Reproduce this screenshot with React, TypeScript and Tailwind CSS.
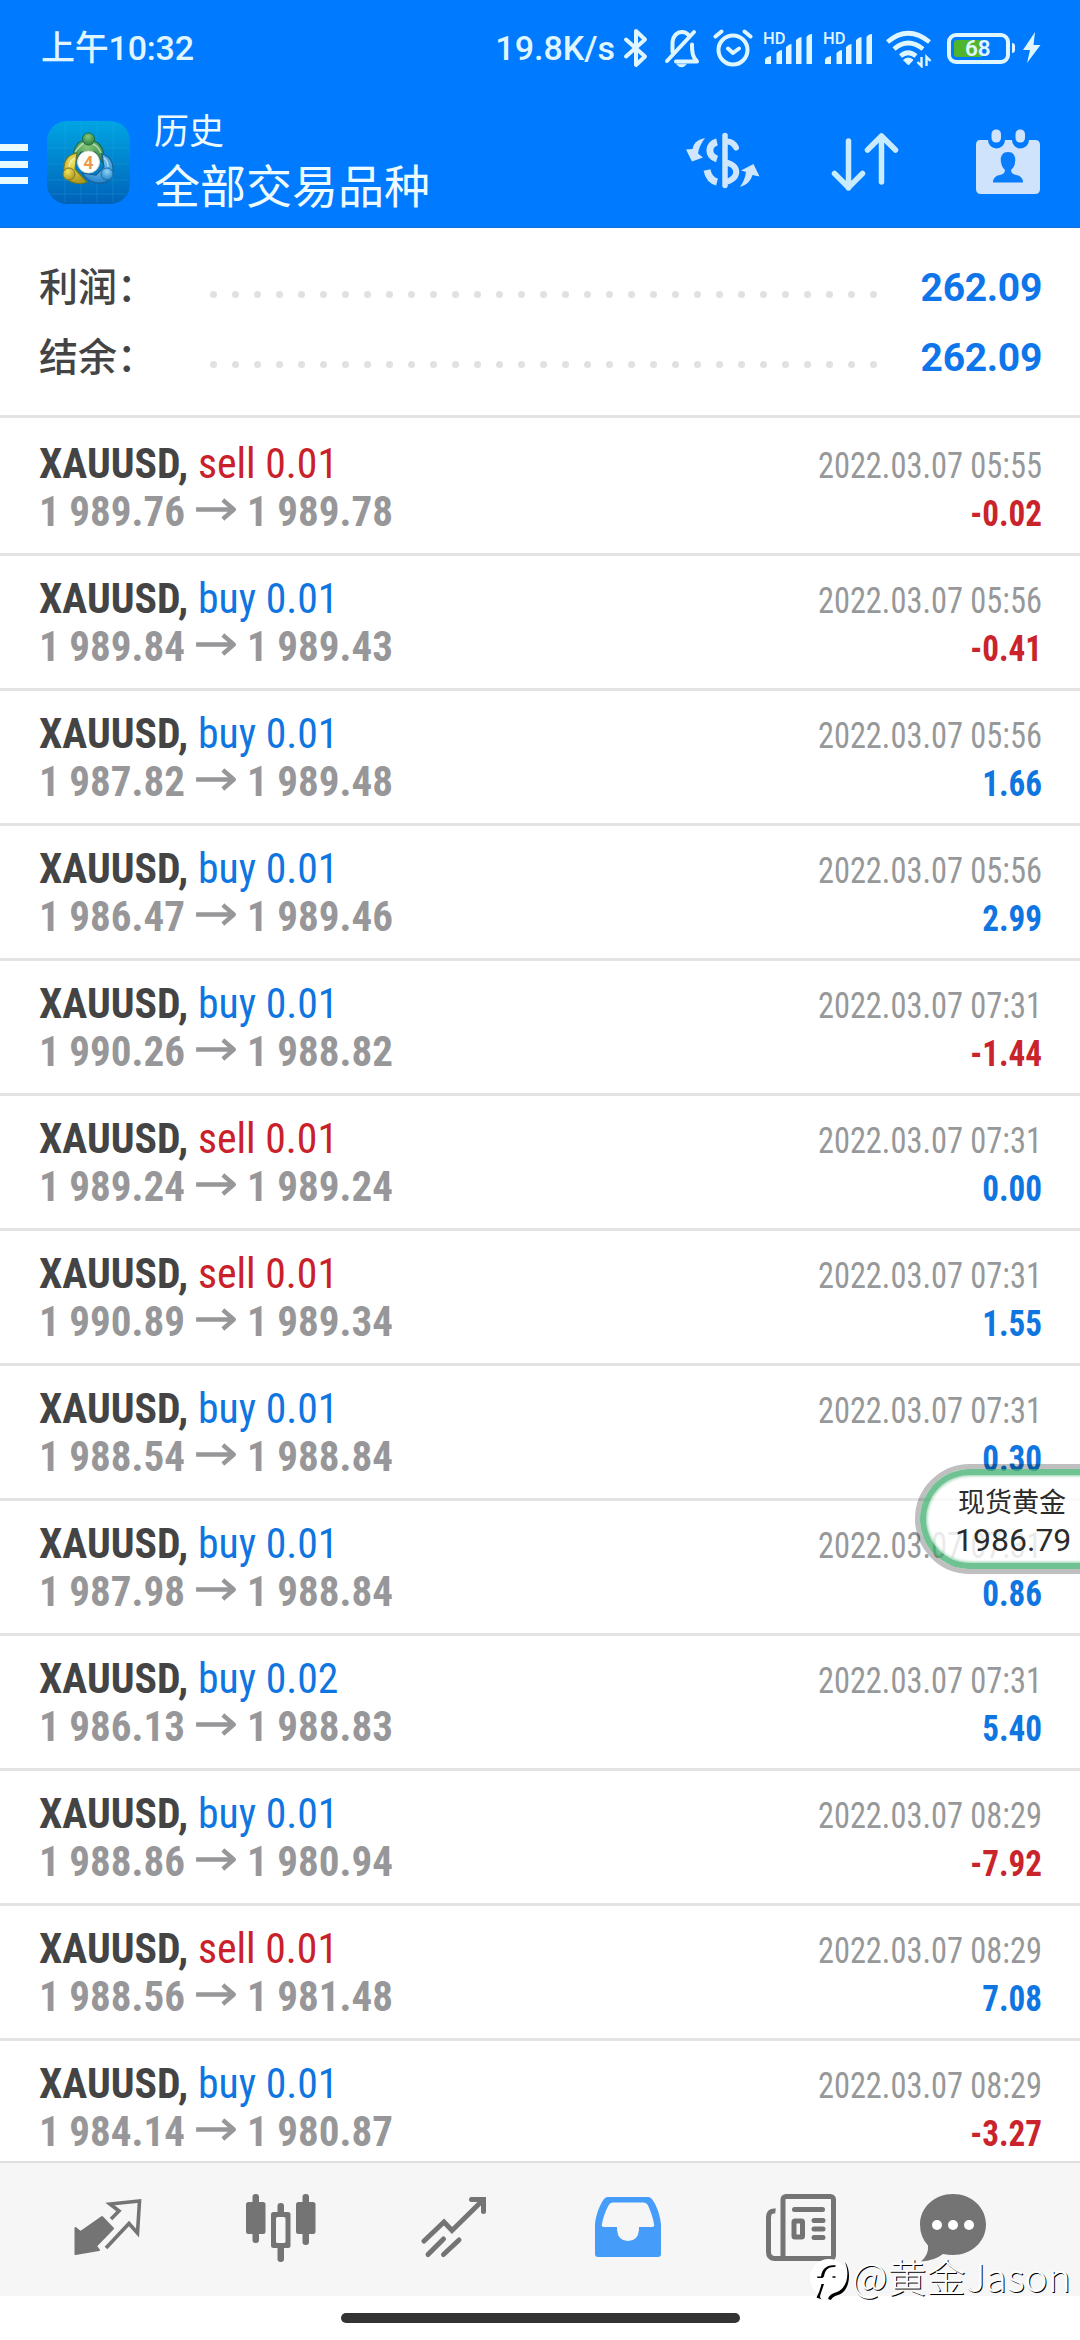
type Deal = {
  side: "buy" | "sell";
  volume: string;
  open: string;
  close: string;
  time: string;
  profit: string;
};

const DEALS: Deal[] = [
  { side: "sell", volume: "0.01", open: "1 989.76", close: "1 989.78", time: "2022.03.07 05:55", profit: "-0.02" },
  { side: "buy", volume: "0.01", open: "1 989.84", close: "1 989.43", time: "2022.03.07 05:56", profit: "-0.41" },
  { side: "buy", volume: "0.01", open: "1 987.82", close: "1 989.48", time: "2022.03.07 05:56", profit: "1.66" },
  { side: "buy", volume: "0.01", open: "1 986.47", close: "1 989.46", time: "2022.03.07 05:56", profit: "2.99" },
  { side: "buy", volume: "0.01", open: "1 990.26", close: "1 988.82", time: "2022.03.07 07:31", profit: "-1.44" },
  { side: "sell", volume: "0.01", open: "1 989.24", close: "1 989.24", time: "2022.03.07 07:31", profit: "0.00" },
  { side: "sell", volume: "0.01", open: "1 990.89", close: "1 989.34", time: "2022.03.07 07:31", profit: "1.55" },
  { side: "buy", volume: "0.01", open: "1 988.54", close: "1 988.84", time: "2022.03.07 07:31", profit: "0.30" },
  { side: "buy", volume: "0.01", open: "1 987.98", close: "1 988.84", time: "2022.03.07 07:31", profit: "0.86" },
  { side: "buy", volume: "0.02", open: "1 986.13", close: "1 988.83", time: "2022.03.07 07:31", profit: "5.40" },
  { side: "buy", volume: "0.01", open: "1 988.86", close: "1 980.94", time: "2022.03.07 08:29", profit: "-7.92" },
  { side: "sell", volume: "0.01", open: "1 988.56", close: "1 981.48", time: "2022.03.07 08:29", profit: "7.08" },
  { side: "buy", volume: "0.01", open: "1 984.14", close: "1 980.87", time: "2022.03.07 08:29", profit: "-3.27" },
];

const Signal = () => (
  <svg className="overflow-visible" width="50" height="36" viewBox="0 0 50 36" fill="#dff6ff">
    <text x="0" y="14" fontSize="16.500" fontWeight="500" fontFamily="Roboto, sans-serif">
      HD
    </text>
    <path d="M2 34v-4q0-3 6-4v8zM13.500 34v-11q3-3 5.500-3v14zM23 34v-17q3-3 5.500-3v20zM33 34v-24q3-3 5.500-3v27zM43.500 34v-27q2-3 5.500-3v30z" />
  </svg>
);

const StatusBar = () => (
  <div className="flex h-[96px] items-center justify-between pl-[41px] pr-[39px] font-['Roboto','Noto_Sans_CJK_SC',sans-serif] text-[34px] font-medium leading-[48px] text-[#e0f6ff]">
    <span className="tracking-[-0.2px]">上午10:32</span>
    <div className="flex items-center">
      <span className="mr-[8px]">19.8K/s</span>
      {/* bluetooth */}
      <svg className="mr-[15px]" width="26" height="40" viewBox="0 0 26 40" fill="none" stroke="#dff6ff" strokeWidth="4" strokeLinejoin="round" strokeLinecap="round">
        <path d="M3 11.500l19 17-9 8.500v-34l9 8.500-19 17" />
      </svg>
      {/* muted bell */}
      <svg className="mr-[13px]" width="36" height="40" viewBox="0 0 36 40" fill="none" stroke="#dff6ff" strokeWidth="4" strokeLinecap="round" strokeLinejoin="round">
        <path d="M3 33L30 4" />
        <path d="M8.500 24V14C9 8 13 4 18 4c3 0 5 1 6.500 3" />
        <path d="M12 33.500h21c-4-4-5-8-5-17" />
        <path d="M13 36.500q4.500 5 9 0z" fill="#dff6ff" strokeWidth="1" />
      </svg>
      {/* alarm */}
      <svg className="mr-[10px]" width="40" height="40" viewBox="0 0 40 40" fill="none" stroke="#dff6ff" strokeWidth="4" strokeLinecap="round" strokeLinejoin="round">
        <circle cx="20" cy="22" r="14.500" />
        <path d="M2.500 8.500l6-5M37.500 8.500l-6-5M15 20.500l5 4.500 6-4.500" />
      </svg>
      <Signal />
      <div className="w-[10px]" />
      <Signal />
      {/* wifi */}
      <svg className="ml-[12px] mr-[15px]" width="47" height="40" viewBox="0 0 47 40" fill="none" stroke="#dff6ff" strokeWidth="4.600">
        <path d="M2.500 14Q23 -3.500 44.500 14M9 21Q23 9 38 21M15.500 28Q23 21.500 31 28" />
        <path d="M18.500 32q5-4 9.500 0l-4.500 5z" fill="#dff6ff" strokeWidth="1" />
        <path d="M36.500 29v9l-4-4M41.500 38v-9l4 4" strokeWidth="2.400" />
      </svg>
      {/* battery */}
      <div className="flex h-[31px] w-[63px] items-center rounded-[9px] border-[4px] border-[#dff6ff]">
        <div className="ml-[3px] flex h-[17px] w-[28px] items-center rounded-l-[3px] bg-[#4fb52c]">
          <span className="ml-[11px] text-[22.5px] font-semibold leading-[20px]">68</span>
        </div>
      </div>
      <div className="ml-[2px] h-[10px] w-[3px] rounded-r-sm bg-[#dff6ff]" />
      <svg className="ml-[8px]" width="18" height="32" viewBox="0 0 18 32" fill="#dff6ff">
        <path d="M12 0L0 18h7L4 31 17.500 13H10.500z" />
      </svg>
    </div>
  </div>
);

const AppLogo = () => (
  <svg width="83" height="83" viewBox="0 0 83 83">
    <defs>
      <linearGradient id="tile" x1="0" y1="0" x2="0" y2="1">
        <stop offset="0" stopColor="#00a5e3" />
        <stop offset="1" stopColor="#0062b8" />
      </linearGradient>
      <radialGradient id="green" cx=".45" cy=".3" r=".7">
        <stop offset="0" stopColor="#86c878" />
        <stop offset="1" stopColor="#2d8244" />
      </radialGradient>
      <radialGradient id="yellow" cx=".4" cy=".3" r=".7">
        <stop offset="0" stopColor="#f2e45c" />
        <stop offset="1" stopColor="#ae9a20" />
      </radialGradient>
      <radialGradient id="blue" cx=".5" cy=".3" r=".7">
        <stop offset="0" stopColor="#8fd4f6" />
        <stop offset="1" stopColor="#2383c9" />
      </radialGradient>
    </defs>
    <rect width="83" height="83" rx="20" fill="url(#tile)" />
    <path d="M18 2v79M34 1v81M50 1v81M66 2v79M1 27h81M1 43h81M1 59h81M4 73h75" stroke="#36b4e6" strokeOpacity=".22" />
    <path d="M27 42C24 23 34 19 41 19S60 24 56 42L48 31H34z" fill="url(#green)" stroke="#1c6a4f" strokeWidth="1.200" />
    <path d="M30 32C18 34 15 44 18 54c3 9 16 10 22 7L28 48z" fill="url(#yellow)" stroke="#6f7628" strokeWidth="1.200" />
    <path d="M55 33c10 3 13 12 10 22-5 10-22 10-30-3l14 2 8-8z" fill="url(#blue)" stroke="#175f98" strokeWidth="1.200" />
    <path d="M28 31q7-9 10-9M46 23q5 2 8 9M22 46q1-7 6-9M61 46q0-6-4-9" stroke="#fff" strokeOpacity=".55" strokeWidth="1.500" fill="none" />
    <circle cx="41.500" cy="18" r="6" fill="url(#green)" stroke="#236b42" />
    <circle cx="22" cy="53" r="6" fill="url(#yellow)" stroke="#83772a" />
    <circle cx="60" cy="53" r="6" fill="url(#blue)" stroke="#1e70ab" />
    <circle cx="41.500" cy="41" r="11" fill="#fff" stroke="#d5dbc9" />
    <text x="41.500" y="47.500" textAnchor="middle" fontSize="18" fontWeight="700" fill="#ee9a4b" fontFamily="Roboto, sans-serif">
      4
    </text>
  </svg>
);

const AppBar = () => (
  <div className="flex h-[132px] border-b border-[#146fd8] text-[#edfbff]">
    <div className="mr-[19px] mt-[48px] flex h-[40px] w-[28px] flex-col justify-between">
      <div className="h-[7px] bg-[#e6faff]" />
      <div className="h-[7px] bg-[#e6faff]" />
      <div className="h-[7px] bg-[#e6faff]" />
    </div>
    <div className="mt-[25px]">
      <AppLogo />
    </div>
    <div className="ml-[24px] mt-[10px] flex flex-col">
      <span className="text-[35px] leading-[46px]">历史</span>
      <span className="mt-[3px] text-[46px] leading-[56px]">全部交易品种</span>
    </div>
    <div className="ml-auto flex items-start pr-[40px] pt-[33px]">
      <svg className="mt-[3px]" width="74" height="58" viewBox="0 0 74 58" fill="none" stroke="#cfe6fd" strokeWidth="6">
        <path d="M39 3.500v50" strokeWidth="5.500" strokeLinecap="round" />
        <path d="M31 10C22 12 21 24 31 27M31 50q-8-2-10-12" strokeWidth="7" />
        <path d="M41 9.500q6 0 9 6" strokeWidth="6" strokeLinecap="round" />
        <path d="M39 30.500c15 2 15 17 0 19.500" />
        <path d="M19 6Q8 8 6.500 17L0 17.500 6 29.500 17 25.500 12 21.500Q13 14 19 6z" fill="#cfe6fd" stroke="none" />
        <path d="M54 55q10-3 12.500-12l7 1.500L67.500 32 55 38.500l5 1.500Q59 48 54 55z" fill="#cfe6fd" stroke="none" />
      </svg>
      <svg className="ml-[70px] mt-[3px]" width="70" height="60" viewBox="0 0 70 60" fill="none" stroke="#c8ecfd" strokeWidth="5.500" strokeLinecap="round" strokeLinejoin="round">
        <path d="M18.500 9v47M4.500 41.500l14 14 14-14M51.500 50V4M37.500 18l14-14 14 14" />
      </svg>
      <svg className="ml-[76px]" width="64" height="66" viewBox="0 0 64 66" fill="#cfe3fc">
        <path d="M4 11h8a8.500 8.500 0 0 0 17 0h7a8.500 8.500 0 0 0 17 0h6q5 0 5 5v44q0 5-5 5H5q-5 0-5-5V16q0-5 4-5z" />
        <rect x="15.500" y="0.500" width="9.500" height="13" rx="4.500" />
        <rect x="39.500" y="0.500" width="9.500" height="13" rx="4.500" />
        <path d="M32 23c-6 0-8 5-7 10 .5 4 2 6 4 8q0 4-5 5-7 1-7 7.500h30q0-6.500-7-7.500-5-1-5-5c2-2 4-4 4-8 1-5-1-10-7-10z" fill="#0a7dfa" />
      </svg>
    </div>
  </div>
);

const SummaryLine = ({ label, value }: { label: string; value: string }) => (
  <div className="flex h-[70px] items-center">
    <span className="mb-[7px] w-[171px] text-[39px] font-medium leading-[60px] text-[#444]">{label}</span>
    <div className="mt-[15px] flex gap-[15px]">
      {Array.from({ length: 31 }, (_, i) => (
        <div key={i} className="size-[7px] rounded-full bg-[#e1e1e1]" />
      ))}
    </div>
    <span className="ml-auto mt-[2px] font-['Roboto',sans-serif] text-[39px] font-bold leading-[60px] tracking-[-0.3px] text-[#0f75ea]">
      {value}
    </span>
  </div>
);

const DealRow = ({ deal }: { deal: Deal }) => (
  <div className="h-[135px] shrink-0 border-b-[3px] border-[#e3e3e3] pl-[39px] pr-[38px] pt-[18px] font-['Roboto_Condensed',Roboto,sans-serif] font-stretch-condensed">
    <div className="flex h-[48px] items-baseline justify-between leading-[48px]">
      <div className="origin-left scale-x-[0.97] whitespace-pre text-[43px]">
        <span className="font-bold text-[#444]">XAUUSD, </span>
        <span className={deal.side === "buy" ? "text-[#0f75e0]" : "text-[#c9202a]"}>
          {deal.side} {deal.volume}
        </span>
      </div>
      <span className="origin-right scale-x-[0.9] text-[36px] text-[#96989a]">{deal.time}</span>
    </div>
    <div className="flex h-[48px] items-baseline justify-between leading-[48px]">
      <div className="flex origin-left scale-x-[0.955] items-baseline text-[43px] font-bold text-[#97979a]">
        <span>{deal.open}</span>
        <svg className="ml-[11px] mr-[10px]" width="44" height="28" viewBox="0 0 43 28" fill="none" stroke="#97979a" strokeWidth="4.500">
          <path d="M0 11.500h39M28 2l11.500 9.500L28 21" strokeLinejoin="round" />
        </svg>
        <span>{deal.close}</span>
      </div>
      <span
        className={
          deal.profit.startsWith("-")
            ? "origin-right scale-x-[0.92] text-[36px] font-bold text-[#c9242b]"
            : "origin-right scale-x-[0.92] text-[36px] font-bold text-[#0f75e0]"
        }
      >
        {deal.profit}
      </span>
    </div>
  </div>
);

const PriceBubble = () => (
  <div className="absolute right-[-60px] top-[1464px] h-[110px] w-[225px] rounded-full border-[5px] border-black/25">
    <div className="flex h-full flex-col rounded-full border-[6px] border-[#3fae6e]/75 bg-white/80 bg-clip-padding pl-[32px] pt-[6px] text-[#2b2b2b] shadow-[inset_0_0_3px_1px_#8fd0aa]">
      <span className="text-[27px] leading-[40px]">现货黄金</span>
      <span className="-ml-[3px] font-['Roboto',sans-serif] text-[32px] leading-[38px]">1986.79</span>
    </div>
  </div>
);

const TabBar = () => (
  <div className="flex h-[135px] shrink-0 items-start border-t-2 border-[#dfdfdf] bg-[#f6f6f6] pl-[21px] pt-[31px] text-[#747474]">
    <div className="flex w-[173.400px] justify-center">
      <svg width="68" height="68" viewBox="0 0 68 68">
        <path d="M28 23L39 34.500 22 52l3 4L1.500 60V34l5 4z" fill="currentColor" stroke="currentColor" strokeWidth="2" strokeLinejoin="round" />
        <path d="M37 25l8-8-9-7 29.500-3-2 32-8.500-9.500L32 54" fill="none" stroke="currentColor" strokeWidth="3.600" />
      </svg>
    </div>
    <div className="flex w-[173.400px] justify-center">
      <svg width="70" height="68" viewBox="0 0 70 68" fill="currentColor">
        <rect x="0" y="8" width="19.500" height="32" rx="2.500" />
        <rect x="6.500" y="0" width="6.500" height="49" rx="3" />
        <rect x="50" y="8" width="19.500" height="32" rx="2.500" />
        <rect x="56.500" y="0" width="6.500" height="51" rx="3" />
        <rect x="31.500" y="9" width="6.500" height="12" rx="3" />
        <rect x="31.500" y="50" width="6.500" height="18" rx="3" />
        <path fillRule="evenodd" d="M27.500 18h14.500q2.500 0 2.500 2.500v31q0 2.500-2.500 2.500H27.500q-2.500 0-2.500-2.500v-31q0-2.500 2.500-2.500zM31.500 23q-1.500 0-1.500 1.500v23q0 1.500 1.500 1.500h6.500q1.500 0 1.500-1.500v-23q0-1.500-1.500-1.500z" />
      </svg>
    </div>
    <div className="flex w-[173.400px] justify-center">
      <svg width="66" height="68" viewBox="0 0 66 68" fill="none" stroke="currentColor" strokeWidth="5" strokeLinecap="round">
        <path d="M3 47l20-19 8 8.500L62 6M50.500 5.500h12v12" strokeLinejoin="miter" />
        <path d="M7 60.500L22.500 45M22.500 60.500L38 46" />
      </svg>
    </div>
    <div className="flex w-[173.400px] justify-center">
      <svg width="66" height="68" viewBox="0 0 66 68" fill="#459df9">
        <path fillRule="evenodd" d="M14 3h38c4 0 5 2 7 5 4 7 7 17 7 24v28q0 3-3 3H3q-3 0-3-3V32C0 25 3 15 7 8c2-3 3-5 7-5zM18 8.500q-3 0-4.500 3C10 18 8 24 7 30q-1 3 2 3h13v3q1 11 11 11t11-11v-3h13q3 0 2-3C58 24 56 18 53 11.500q-1.500-3-5-3z" />
      </svg>
    </div>
    <div className="flex w-[173.400px] justify-center">
      <svg width="70" height="68" viewBox="0 0 70 68" fill="none" stroke="currentColor" strokeWidth="5" strokeLinecap="round">
        <rect x="17" y="2.500" width="50.500" height="62" rx="3" />
        <path d="M9.500 17q-7-1-7 7V58q0 6 6 6.500H20" strokeLinecap="butt" />
        <path d="M28.500 15.500h28M48 26.500h9M48 35h9M48 43.500h9" />
        <rect x="28" y="27" width="8.500" height="16" rx="1" />
      </svg>
    </div>
    <div className="flex w-[130px] justify-center">
      <svg width="66" height="68" viewBox="0 0 66 68">
        <path d="M33 0c18 0 33 13 33 30.500S51 61 33 61q-5 0-10-1-9 7-22 7.500 8-7 7-16Q0 43 0 30.500C0 13 15 0 33 0z" fill="currentColor" />
        <g fill="#fff">
          <circle cx="17" cy="31" r="5" />
          <circle cx="33" cy="31" r="5" />
          <circle cx="49" cy="31" r="5" />
        </g>
      </svg>
    </div>
  </div>
);

const Watermark = () => (
  <div className="absolute left-[810px] top-[2256px] flex items-start">
    <svg width="40" height="50" viewBox="0 0 40 50">
      <circle cx="19" cy="22" r="19" fill="#fff" />
      <path d="M7 20.500h4C12 12 18 8 26 9.500l-1 1.500c-6-.5-10 2-11 9.500l-1.500 1.500H7.500zM11.500 28h2.500L10 40q0 3 3 4l-6.500-2.500q3-5 5-13.500z" fill="#000" />
      <path d="M35 6c5 12 2 26-8 30q-8 2-9 7l3 1q1-3 7-5C40 36 42 15 35 6z" fill="#000" />
      <path d="M22.500 21h3" stroke="#000" strokeWidth="1.500" />
    </svg>
    <span className="ml-[2px] -mt-[5px] text-[39px] font-light leading-[48px] text-white [text-shadow:1px_1px_0_#000]">
      @黄金Jason
    </span>
  </div>
);

export default function App() {
  return (
    <div className="relative flex h-[2340px] w-[1080px] flex-col overflow-hidden bg-white font-['Noto_Sans_CJK_SC',sans-serif]">
      <div className="shrink-0 bg-[#007aff]">
        <StatusBar />
        <AppBar />
      </div>

      <div className="h-[190px] shrink-0 border-b-[3px] border-[#e3e3e3] pl-[39px] pr-[38px] pt-[24px]">
        <SummaryLine label="利润：" value="262.09" />
        <SummaryLine label="结余：" value="262.09" />
      </div>

      <div className="flex min-h-0 flex-1 flex-col overflow-hidden pt-[3px]">
        {DEALS.map((deal, i) => (
          <DealRow key={i} deal={deal} />
        ))}
      </div>

      <TabBar />
      <div className="flex h-[44px] shrink-0 justify-center pt-[17px]">
        <div className="h-[10px] w-[399px] rounded-full bg-[#333]" />
      </div>

      <PriceBubble />
      <Watermark />
    </div>
  );
}
